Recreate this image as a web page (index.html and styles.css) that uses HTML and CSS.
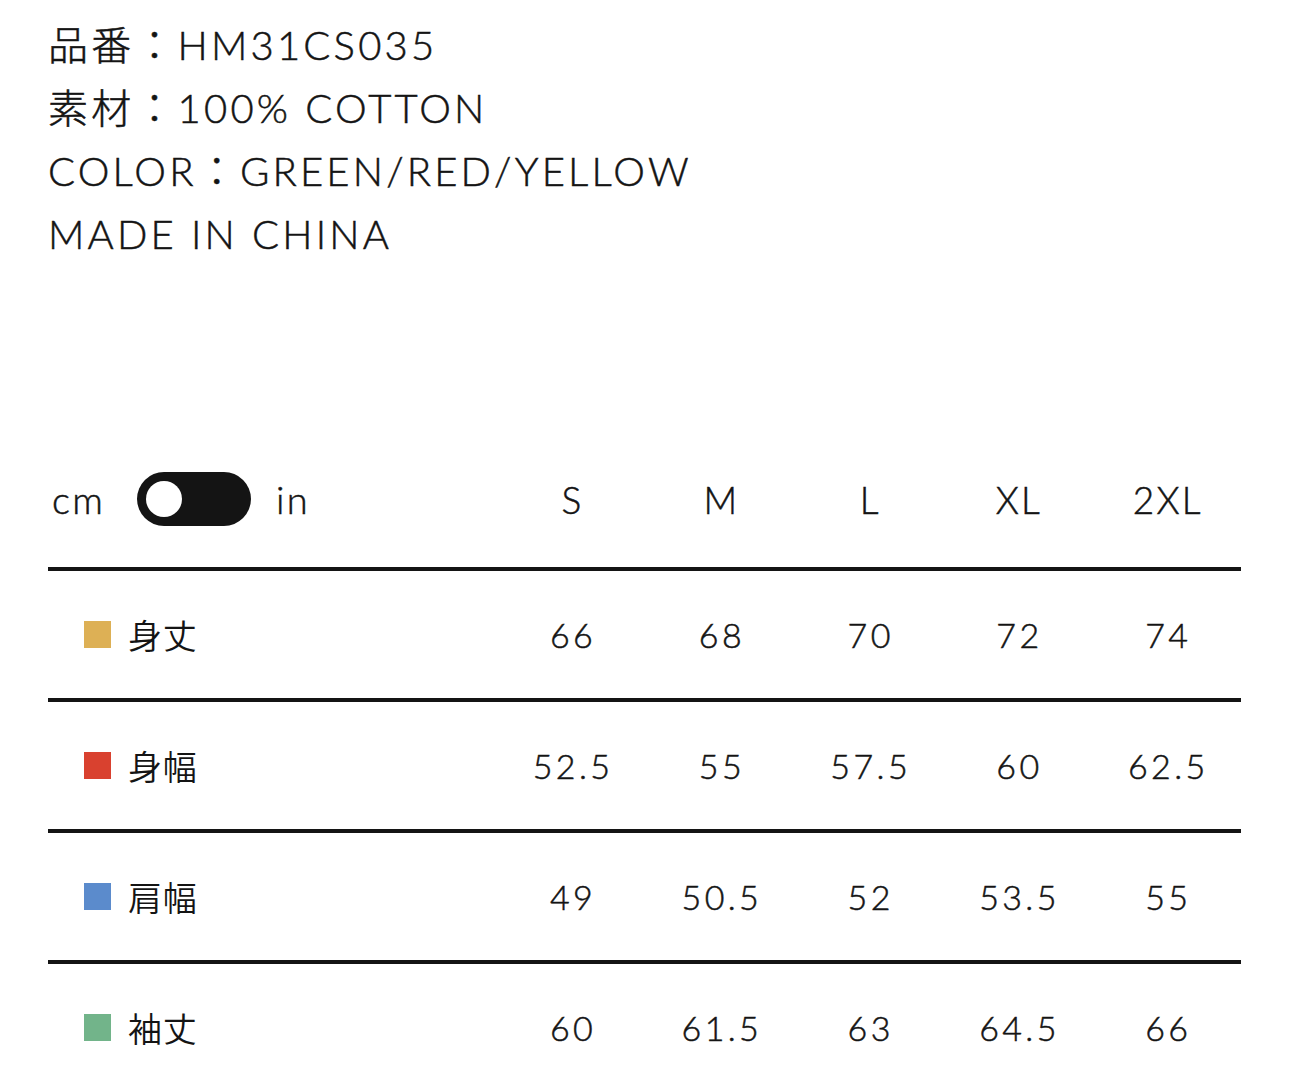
FILE: index.html
```html
<!DOCTYPE html>
<html lang="ja">
<head>
<meta charset="utf-8">
<title>Size</title>
<link rel="stylesheet" href="styles.css">
</head>
<body>
<div class="page">
  <div class="spec">
    <p class="spec-line">品番：HM31CS035</p>
    <p class="spec-line">素材：100% COTTON</p>
    <p class="spec-line">COLOR：GREEN/RED/YELLOW</p>
    <p class="spec-line">MADE IN CHINA</p>
  </div>

  <div class="table">
    <div class="row head">
      <div class="unit">
        <span class="unit-label cm">cm</span>
        <span class="toggle"><span class="knob"></span></span>
        <span class="unit-label in">in</span>
      </div>
      <div class="cell">S</div>
      <div class="cell">M</div>
      <div class="cell">L</div>
      <div class="cell">XL</div>
      <div class="cell">2XL</div>
    </div>
    <div class="row body">
      <div class="label"><span class="swatch yellow"></span><span class="name">身丈</span></div>
      <div class="cell num">66</div>
      <div class="cell num">68</div>
      <div class="cell num">70</div>
      <div class="cell num">72</div>
      <div class="cell num">74</div>
    </div>
    <div class="row body">
      <div class="label"><span class="swatch red"></span><span class="name">身幅</span></div>
      <div class="cell num">52.5</div>
      <div class="cell num">55</div>
      <div class="cell num">57.5</div>
      <div class="cell num">60</div>
      <div class="cell num">62.5</div>
    </div>
    <div class="row body">
      <div class="label"><span class="swatch blue"></span><span class="name">肩幅</span></div>
      <div class="cell num">49</div>
      <div class="cell num">50.5</div>
      <div class="cell num">52</div>
      <div class="cell num">53.5</div>
      <div class="cell num">55</div>
    </div>
    <div class="row body">
      <div class="label"><span class="swatch green"></span><span class="name">袖丈</span></div>
      <div class="cell num">60</div>
      <div class="cell num">61.5</div>
      <div class="cell num">63</div>
      <div class="cell num">64.5</div>
      <div class="cell num">66</div>
    </div>
  </div>
</div>
</body>
</html>
```

FILE: styles.css
```css
* { box-sizing: border-box; }

html, body {
  margin: 0;
  padding: 0;
  background: #ffffff;
}

body {
  color: #141414;
  font-family: Lato, "Noto Sans CJK JP", sans-serif;
  font-weight: 300;
  -webkit-text-stroke: 0.5px #141414;
  overflow: hidden;
}

.page {
  width: 1290px;
  height: 1084px;
  padding: 14px 49px 0 48px;
}

.spec {
  display: flex;
  flex-direction: column;
}

.spec-line {
  margin: 0;
  font-size: 40px;
  line-height: 63px;
  letter-spacing: 0.08em;
  white-space: nowrap;
}

.table {
  margin-top: 165px;
  width: 1193px;
}

.row {
  display: grid;
  grid-template-columns: 449px repeat(5, 148.8px);
  align-items: center;
}

.row.head {
  height: 136px;
}

.row.body {
  height: 131px;
  border-top: 4px solid #141414;
}

.unit {
  display: flex;
  align-items: center;
  padding-left: 4px;
}

.unit-label {
  font-size: 38px;
  letter-spacing: 0.06em;
  line-height: 1;
}

.unit-label.cm { margin-right: 32px; }
.unit-label.in { margin-left: 25px; }

.toggle {
  width: 114px;
  height: 54px;
  border-radius: 27px;
  background: #141414;
  display: flex;
  align-items: center;
  padding-left: 9px;
}

.knob {
  width: 36px;
  height: 36px;
  border-radius: 50%;
  background: #ffffff;
}

.cell {
  text-align: center;
  font-size: 37px;
  letter-spacing: 0.06em;
  line-height: 1;
  padding-left: 0.06em;
}

.cell.num {
  font-size: 34px;
  letter-spacing: 0.1em;
  padding-left: 0.1em;
}

.label {
  display: flex;
  align-items: center;
  padding-left: 36px;
}

.swatch {
  width: 27px;
  height: 27px;
  margin-right: 17px;
}

.swatch.yellow { background: #ddb055; }
.swatch.red { background: #d9412f; }
.swatch.blue { background: #5b8bcc; }
.swatch.green { background: #72b48a; }

.name {
  font-family: "Noto Sans CJK JP", sans-serif;
  font-weight: 350;
  -webkit-text-stroke: 0;
  font-size: 34px;
  line-height: 1;
  letter-spacing: 0.02em;
}
```
